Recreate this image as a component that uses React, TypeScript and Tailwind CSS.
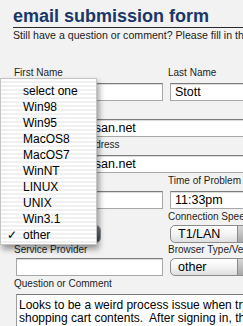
import React from "react";

const osOptions = [
  "select one",
  "Win98",
  "Win95",
  "MacOS8",
  "MacOS7",
  "WinNT",
  "LINUX",
  "UNIX",
  "Win3.1",
  "other",
];

const TextBox = ({ value = "", wide = false }: { value?: string; wide?: boolean }) => (
  <div
    className={`${
      wide ? "w-[260px]" : "w-[147px]"
    } ml-[2px] h-[18px] bg-white border border-[#a8a8a8] border-t-[#7c7c7c] shadow-[inset_0_1px_1px_rgba(0,0,0,0.15)] px-[4px] text-[12.5px] leading-[16px] text-black whitespace-nowrap overflow-hidden`}
  >
    {value}
  </div>
);

const PopupButton = ({ value, dark = false, width }: { value: string; dark?: boolean; width: string }) => (
  <div
    className={`${width} ml-[2px] h-[18px] flex rounded-[5px] border border-[#8c8c8c] bg-gradient-to-b from-white via-[#f4f4f4] to-[#dedede] overflow-hidden`}
  >
    <span className="pl-[7px] text-[12.5px] leading-[16px] text-black whitespace-nowrap">{value}</span>
    <span
      className={`ml-auto w-[16px] border-l ${
        dark
          ? "border-[#3a4049] bg-gradient-to-b from-[#7a818b] to-[#434a54]"
          : "border-[#8a8a8a] bg-gradient-to-b from-[#d8d8d8] to-[#a9a9a9]"
      }`}
    />
  </div>
);

const Label = ({ text, h }: { text: string; h: string }) => (
  <div className={`${h} text-[10px] leading-[12px] text-[#1e1e1e] whitespace-nowrap`}>{text}</div>
);

export default function App() {
  return (
    <div className="relative w-[243px] h-[326px] overflow-hidden bg-[#f2f2f2] font-['Liberation_Sans',Arial,sans-serif]">
      {/* Header */}
      <h1 className="ml-[13px] pt-[6px] text-[18px] leading-[21px] font-bold text-[#1b3768] border-b border-[#2a2a2a] whitespace-nowrap">
        email submission form
      </h1>
      <p className="ml-[13px] mt-[1px] text-[10.6px] leading-[12px] text-[#1a1a1a] whitespace-nowrap">
        Still have a question or comment? Please fill in the form below and we will reply.
      </p>

      {/* Form */}
      <div className="mt-[26px] pl-[14px] grid grid-cols-[149px_149px] gap-x-[5px]">
        <div className="mb-[2px]">
          <Label text="First Name" h="h-[16px]" />
          <TextBox />
        </div>
        <div className="mb-[2px]">
          <Label text="Last Name" h="h-[16px]" />
          <TextBox value="Stott" />
        </div>

        <div className="col-span-2 mb-[2px]">
          <Label text="Email Address" h="h-[16px]" />
          <TextBox value="dstott@cybersan.net" wide />
        </div>
        <div className="col-span-2 mb-[2px]">
          <Label text="Re-enter Email Address" h="h-[16px]" />
          <TextBox value="dstott@cybersan.net" wide />
        </div>

        <div className="mb-[2px]">
          <Label text="Date of Problem" h="h-[16px]" />
          <TextBox />
        </div>
        <div className="mb-[2px]">
          <Label text="Time of Problem" h="h-[16px]" />
          <TextBox value="11:33pm" />
        </div>

        <div className="mb-[1px]">
          <Label text="Operating System" h="h-[14px]" />
          <PopupButton value="other" dark width="w-[85px]" />
        </div>
        <div className="mb-[1px]">
          <Label text="Connection Speed" h="h-[14px]" />
          <PopupButton value="T1/LAN" width="w-[84px]" />
        </div>

        <div className="mb-[2px]">
          <Label text="Service Provider" h="h-[14px]" />
          <TextBox />
        </div>
        <div className="mb-[2px]">
          <Label text="Browser Type/Version" h="h-[14px]" />
          <PopupButton value="other" width="w-[84px]" />
        </div>

        <div className="col-span-2">
          <Label text="Question or Comment" h="h-[16px]" />
          <div className="ml-[2px] w-[260px] h-[60px] bg-white border border-[#9c9c9c] border-t-[#777] pl-[2px] pt-[4px] text-[12px] leading-[13px] text-black whitespace-pre overflow-hidden">
            {"Looks to be a weird process issue when trying to view\nshopping cart contents.  After signing in, the\nI went back to my cart.  Then the items were gone"}
          </div>
        </div>
      </div>

      {/* Open popup menu */}
      <div className="absolute left-0 top-[78px] w-[97px] h-[167px] pt-[4px] border border-[#c4c4c4] bg-[image:repeating-linear-gradient(180deg,#ffffff_0px,#ffffff_2px,#f0f0f0_2px,#f0f0f0_4px)] shadow-[2px_4px_6px_rgba(0,0,0,0.4)]">
        {osOptions.map((opt) => (
          <div key={opt} className="relative h-[16px] pl-[22px] text-[12px] leading-[16px] text-black whitespace-nowrap">
            {opt === "other" && <span className="absolute left-[6px] top-0 text-[12px]">✓</span>}
            {opt}
          </div>
        ))}
      </div>
    </div>
  );
}
